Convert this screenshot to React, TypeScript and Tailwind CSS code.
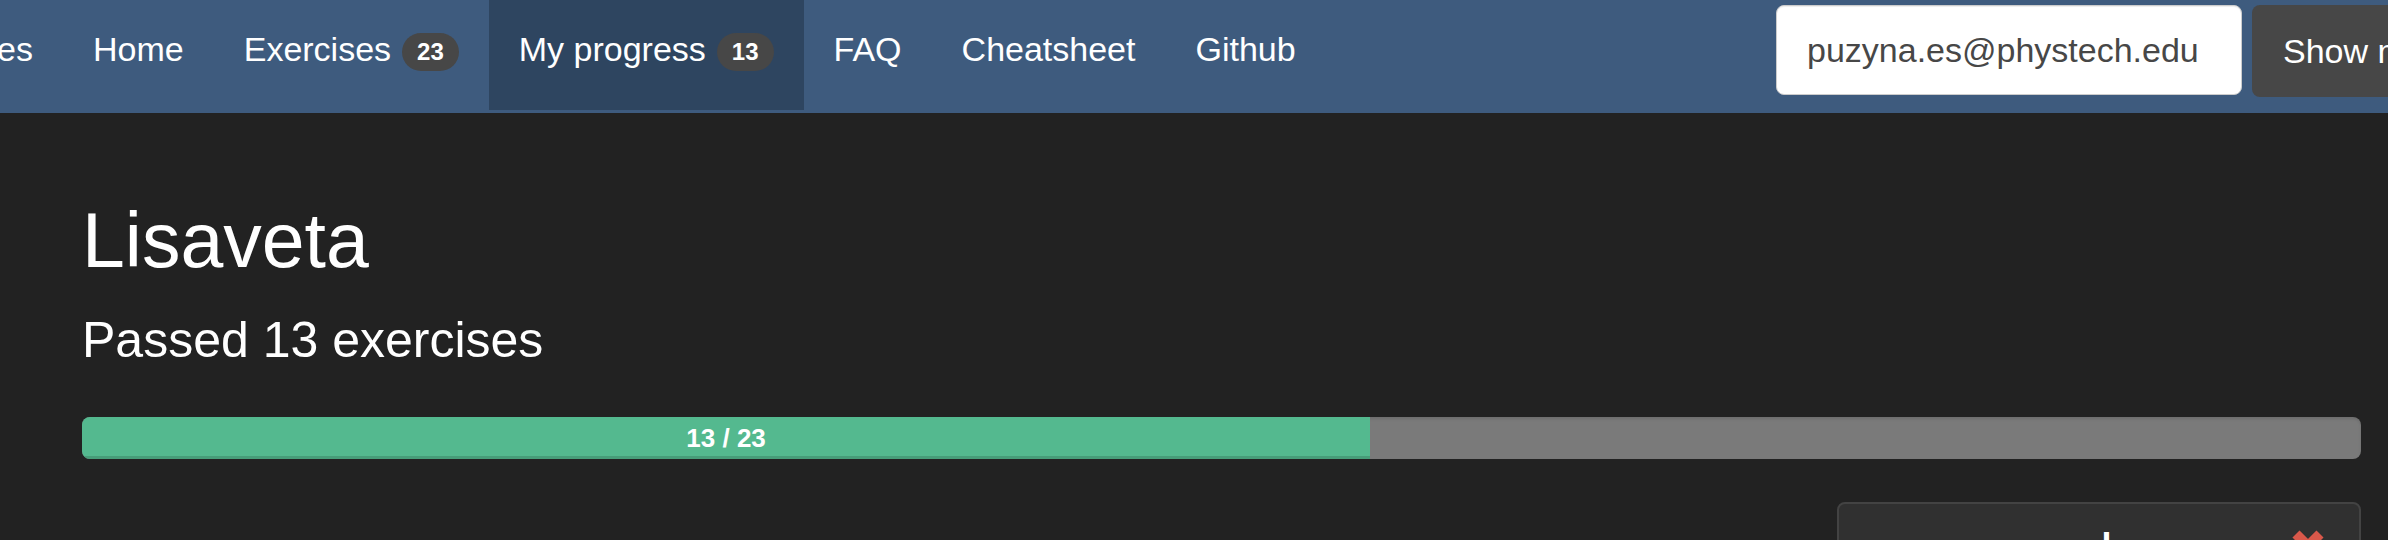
import React from "react";

function Badge({ n }: { n: string }) {
  return (
    <span className="mt-[4px] flex h-[38px] items-center rounded-full bg-[#474747] px-[15px] text-[24px] font-bold leading-[38px] text-white">
      {n}
    </span>
  );
}

function NavItem({
  label,
  badge,
  active,
}: {
  label: string;
  badge?: string;
  active?: boolean;
}) {
  return (
    <div
      className={
        "flex h-[110px] shrink-0 items-start gap-[11px] px-[30px] pt-[29px] " +
        (active ? "bg-[#2e4560]" : "")
      }
    >
      <span className="whitespace-nowrap text-[34px] leading-[40px] text-white">{label}</span>
      {badge && <Badge n={badge} />}
    </div>
  );
}

export default function App() {
  return (
    <div className="h-[540px] w-[2388px] overflow-hidden bg-[#222222] font-['Liberation_Sans',Arial,sans-serif]">
      {/* Navbar */}
      <div className="flex h-[113px] w-[2388px] bg-[#3e5b7e]">
        <div className="flex w-[1776px] shrink-0">
          <div className="flex h-[110px] w-[63px] shrink-0 justify-end overflow-hidden pr-[30px] pt-[29px]">
            <span className="whitespace-nowrap text-[34px] leading-[40px] text-white">Exercises</span>
          </div>
          <NavItem label="Home" />
          <NavItem label="Exercises" badge="23" />
          <NavItem label="My progress" badge="13" active />
          <NavItem label="FAQ" />
          <NavItem label="Cheatsheet" />
          <NavItem label="Github" />
        </div>
        <div className="flex shrink-0 items-start gap-[10px] pt-[5px]">
          <input
            readOnly
            value="puzyna.es@phystech.edu"
            className="h-[90px] w-[466px] rounded-[8px] border border-[#cccccc] bg-white pl-[30px] text-[34px] text-[#474747] shadow-[inset_0_1px_1px_rgba(0,0,0,0.075)] outline-none font-['Liberation_Sans',Arial,sans-serif]"
          />
          <button className="flex h-[92px] shrink-0 items-center whitespace-nowrap rounded-[8px] bg-[#474747] px-[31px] text-[34px] text-white">
            Show my progress
          </button>
        </div>
      </div>

      {/* Content */}
      <div className="ml-[82px] w-[2279px]">
        <h1 className="mt-[85px] text-[77px] font-normal leading-[84px] text-white">Lisaveta</h1>
        <p className="mt-[28px] text-[50px] leading-[60px] text-white">Passed 13 exercises</p>

        <div className="mt-[47px] flex h-[42px] w-full overflow-hidden rounded-[8px] bg-[#7a7a7a] shadow-[inset_0_2px_3px_rgba(0,0,0,0.1)]">
          <div
            className="flex h-full items-center justify-center bg-[#54b98f] text-[26px] font-bold text-white shadow-[inset_0_-3px_0_rgba(0,0,0,0.15)]"
            style={{ width: `${(13 / 23) * 100}%` }}
          >
            13 / 23
          </div>
        </div>

        <div className="mt-[43px] flex justify-end">
          <div className="h-[200px] w-[524px] rounded-[8px] border-2 border-[#434343] bg-[#303030] pt-[23px] pr-[33px] pl-[84px]">
            <div className="flex items-start">
              <div className="flex-1 text-center text-[36px] font-bold leading-[40px] text-white">l</div>
              <svg width="36" height="36" viewBox="0 0 36 36" className="mt-[1px] shrink-0">
                <line x1="6" y1="6" x2="30" y2="30" stroke="#d9584a" strokeWidth="10" />
                <line x1="30" y1="6" x2="6" y2="30" stroke="#d9584a" strokeWidth="10" />
              </svg>
            </div>
          </div>
        </div>
      </div>
    </div>
  );
}
